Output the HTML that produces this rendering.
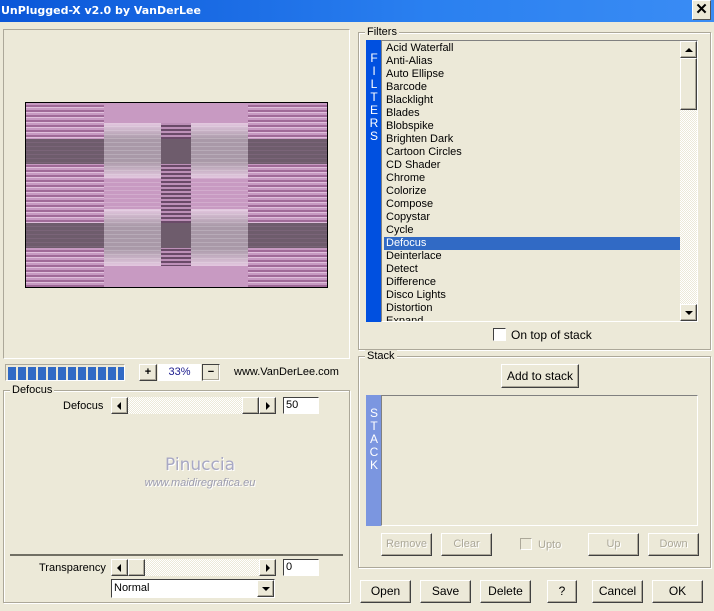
<!DOCTYPE html>
<html><head><meta charset="utf-8"><style>
*{margin:0;padding:0;box-sizing:border-box}
body{width:714px;height:611px;background:#ece9d8;position:relative;overflow:hidden;font-family:"Liberation Sans",sans-serif;font-size:11px;color:#000}
.a{position:absolute}
.title{left:0;top:0;width:714px;height:22px;background:linear-gradient(90deg,#0a56d8,#2a80f0 60%,#3a8cf4);color:#fff;font-weight:bold;font-family:"DejaVu Sans",sans-serif;font-size:11px;line-height:22px;padding-left:1px}
.close{left:692px;top:0;width:19px;height:20px;background:#ece9d8;border:1px solid;border-color:#fff #555 #555 #fff;font-weight:bold;font-size:15px;line-height:18px;text-align:center;color:#000}
.sunk{border:1px solid;border-color:#aca899 #fff #fff #aca899}
.grp{border:1px solid #aca899;box-shadow:inset 1px 1px 0 #fff,1px 1px 0 #fff}
.glab{background:#ece9d8;padding:0 2px;line-height:12px}
.btn{background:#ece9d8;border:1px solid;border-color:#fff #404040 #404040 #fff;box-shadow:inset -1px -1px 0 #aca899;text-align:center;line-height:20px}
.dis{color:#aca899;text-shadow:1px 1px 0 #fff}
.sb{background:#ece9d8;border:1px solid;border-color:#fff #404040 #404040 #fff;box-shadow:inset -1px -1px 0 #aca899;width:17px;height:17px}
.track{background:repeating-conic-gradient(#ece9d8 0 25%,#fff 0 50%) 0 0/2px 2px}
.edit{background:#fff;border:1px solid;border-color:#404040 #fff #fff #404040;padding-left:2px;line-height:14px}
.tri{width:0;height:0;position:absolute}
.item{position:absolute;left:2px;height:13px;line-height:13px;padding-left:2px;width:297px}
.lt{background:linear-gradient(180deg,#e4c8e0,#a999a8 30%,#a999a8 70%,#e4c8e0),repeating-linear-gradient(180deg,transparent 0 2px,rgba(255,255,255,.2) 2px 3px);background-blend-mode:normal}
</style></head><body>
<div class="a title">UnPlugged-X v2.0 by VanDerLee</div>
<div class="a close">✕</div>

<div class="a sunk" style="left:3px;top:29px;width:347px;height:330px"></div>
<div class="a" style="left:25px;top:102px;width:303px;height:186px;border:1px solid #000;overflow:hidden;background:repeating-linear-gradient(180deg,#c79ac2 0 2px,#a06a98 2px 4px,#e0bfdc 4px 5px)">
 <div class="a" style="left:0;top:36px;width:302px;height:25px;background:repeating-linear-gradient(180deg,#6e5c6c 0 3px,#7a6478 3px 4px)"></div>
 <div class="a" style="left:0;top:120px;width:302px;height:25px;background:repeating-linear-gradient(180deg,#6e5c6c 0 3px,#7a6478 3px 4px)"></div>
 <div class="a" style="left:78px;top:0;width:144px;height:186px;background:#c89ac2"></div>
 <div class="a" style="left:78px;top:20px;width:144px;height:55px;background:linear-gradient(180deg,#e4c8e0,#a999a8 30%,#a999a8 70%,#e4c8e0)"></div>
 <div class="a" style="left:78px;top:106px;width:144px;height:57px;background:linear-gradient(180deg,#e4c8e0,#a999a8 30%,#a999a8 70%,#e4c8e0)"></div>
 <div class="a" style="left:78px;top:20px;width:144px;height:143px;background:repeating-linear-gradient(180deg,transparent 0 3px,rgba(255,255,255,.18) 3px 4px)"></div>
 <div class="a" style="left:135px;top:20px;width:30px;height:143px;background:repeating-linear-gradient(180deg,#bd90b8 0 2px,#6a4a68 2px 4px)"></div>
 <div class="a" style="left:135px;top:36px;width:30px;height:25px;background:#6e5c6c"></div>
 <div class="a" style="left:135px;top:120px;width:30px;height:25px;background:#6e5c6c"></div>
</div>

<div class="a sunk" style="left:5px;top:364px;width:120px;height:17px;padding:1px;background:repeating-linear-gradient(90deg,#316ac5 0 8px,#ece9d8 8px 10px) 2px 2px/100% 13px no-repeat"></div>
<div class="a btn" style="left:139px;top:364px;width:18px;height:17px;line-height:15px;font-weight:bold">+</div>
<div class="a" style="left:158px;top:364px;width:43px;height:17px;background:#fff;color:#1a1a8c;text-align:center;line-height:17px">33%</div>
<div class="a btn" style="left:202px;top:364px;width:18px;height:17px;line-height:14px;font-weight:bold;border-color:#404040 #fff #fff #404040">−</div>
<div class="a" style="left:234px;top:366px">www.VanDerLee.com</div>

<div class="a grp" style="left:3px;top:390px;width:347px;height:213px"></div>
<div class="a glab" style="left:10px;top:384px">Defocus</div>
<div class="a" style="left:63px;top:400px">Defocus</div>
<div class="a track" style="left:111px;top:397px;width:165px;height:17px"></div>
<div class="a sb" style="left:111px;top:397px"><div class="tri" style="left:5px;top:4px;border:4px solid transparent;border-right:4px solid #000;border-left:0"></div></div>
<div class="a sb" style="left:242px;top:397px"></div>
<div class="a sb" style="left:259px;top:397px"><div class="tri" style="left:6px;top:4px;border:4px solid transparent;border-left:4px solid #000;border-right:0"></div></div>
<div class="a edit" style="left:283px;top:397px;width:36px;height:17px">50</div>

<div class="a" style="left:0;top:455px;width:400px;text-align:center;color:#a8a8c4;font-size:17px;font-family:'DejaVu Sans',sans-serif;text-shadow:1px 1px 0 #fff">Pinuccia</div>
<div class="a" style="left:0;top:477px;width:400px;text-align:center;color:#9c9cb0;font-size:11px;font-style:italic;text-shadow:1px 1px 0 #fff">www.maidiregrafica.eu</div>

<div class="a" style="left:10px;top:554px;width:333px;height:2px;background:#716f64"></div>
<div class="a" style="left:39px;top:562px">Transparency</div>
<div class="a track" style="left:111px;top:559px;width:165px;height:17px"></div>
<div class="a sb" style="left:111px;top:559px"><div class="tri" style="left:5px;top:4px;border:4px solid transparent;border-right:4px solid #000;border-left:0"></div></div>
<div class="a sb" style="left:128px;top:559px"></div>
<div class="a sb" style="left:259px;top:559px"><div class="tri" style="left:6px;top:4px;border:4px solid transparent;border-left:4px solid #000;border-right:0"></div></div>
<div class="a edit" style="left:283px;top:559px;width:36px;height:17px">0</div>
<div class="a edit" style="left:111px;top:579px;width:164px;height:19px;line-height:17px">Normal</div>
<div class="a sb" style="left:257px;top:580px;height:17px"><div class="tri" style="left:4px;top:6px;border:4px solid transparent;border-top:4px solid #000;border-bottom:0"></div></div>

<div class="a grp" style="left:358px;top:32px;width:353px;height:318px"></div>
<div class="a glab" style="left:365px;top:26px">Filters</div>
<div class="a" style="left:366px;top:40px;width:16px;height:282px;background:#0050e0;color:#fff;text-align:center;line-height:13px;padding-top:12px;font-size:12px">F<br>I<br>L<br>T<br>E<br>R<br>S</div>
<div class="a sunk" style="left:381px;top:40px;width:317px;height:282px;overflow:hidden;border-color:#808080 #fff #fff #808080">
 <div class="item" style="top:1px">Acid Waterfall</div>
 <div class="item" style="top:14px">Anti-Alias</div>
 <div class="item" style="top:27px">Auto Ellipse</div>
 <div class="item" style="top:40px">Barcode</div>
 <div class="item" style="top:53px">Blacklight</div>
 <div class="item" style="top:66px">Blades</div>
 <div class="item" style="top:79px">Blobspike</div>
 <div class="item" style="top:92px">Brighten Dark</div>
 <div class="item" style="top:105px">Cartoon Circles</div>
 <div class="item" style="top:118px">CD Shader</div>
 <div class="item" style="top:131px">Chrome</div>
 <div class="item" style="top:144px">Colorize</div>
 <div class="item" style="top:157px">Compose</div>
 <div class="item" style="top:170px">Copystar</div>
 <div class="item" style="top:183px">Cycle</div>
 <div class="item" style="top:196px;background:#316ac5;color:#fff">Defocus</div>
 <div class="item" style="top:209px">Deinterlace</div>
 <div class="item" style="top:222px">Detect</div>
 <div class="item" style="top:235px">Difference</div>
 <div class="item" style="top:248px">Disco Lights</div>
 <div class="item" style="top:261px">Distortion</div>
 <div class="item" style="top:274px">Expand</div>
 <div class="a track" style="left:298px;top:0;width:17px;height:280px"></div>
 <div class="a sb" style="left:298px;top:0"><div class="tri" style="left:4px;top:6px;border:4px solid transparent;border-bottom:4px solid #000;border-top:0"></div></div>
 <div class="a sb" style="left:298px;top:17px;height:52px"></div>
 <div class="a sb" style="left:298px;top:263px"><div class="tri" style="left:4px;top:6px;border:4px solid transparent;border-top:4px solid #000;border-bottom:0"></div></div>
</div>
<div class="a edit" style="left:493px;top:328px;width:13px;height:13px;padding:0"></div>
<div class="a" style="left:511px;top:328px;font-size:12px">On top of stack</div>

<div class="a grp" style="left:358px;top:356px;width:353px;height:212px"></div>
<div class="a glab" style="left:365px;top:350px">Stack</div>
<div class="a btn" style="left:501px;top:364px;width:78px;height:24px;line-height:22px;font-size:12px">Add to stack</div>
<div class="a" style="left:366px;top:395px;width:16px;height:131px;background:#7b96e0;color:#fff;text-align:center;line-height:13px;padding-top:12px;font-size:12px">S<br>T<br>A<br>C<br>K</div>
<div class="a sunk" style="left:381px;top:395px;width:317px;height:131px;border-color:#808080 #fff #fff #808080"></div>
<div class="a btn dis" style="left:381px;top:533px;width:51px;height:23px">Remove</div>
<div class="a btn dis" style="left:441px;top:533px;width:51px;height:23px">Clear</div>
<div class="a" style="left:520px;top:538px;width:12px;height:12px;border:1px solid;border-color:#aca899 #fff #fff #aca899"></div>
<div class="a dis" style="left:538px;top:539px">Upto</div>
<div class="a btn dis" style="left:588px;top:533px;width:51px;height:23px">Up</div>
<div class="a btn dis" style="left:648px;top:533px;width:51px;height:23px">Down</div>

<div class="a btn" style="left:360px;top:580px;width:51px;height:23px;font-size:12px">Open</div>
<div class="a btn" style="left:420px;top:580px;width:51px;height:23px;font-size:12px">Save</div>
<div class="a btn" style="left:480px;top:580px;width:51px;height:23px;font-size:12px">Delete</div>
<div class="a btn" style="left:547px;top:580px;width:30px;height:23px;font-size:12px">?</div>
<div class="a btn" style="left:592px;top:580px;width:51px;height:23px;font-size:12px">Cancel</div>
<div class="a btn" style="left:652px;top:580px;width:51px;height:23px;font-size:12px">OK</div>
</body></html>
